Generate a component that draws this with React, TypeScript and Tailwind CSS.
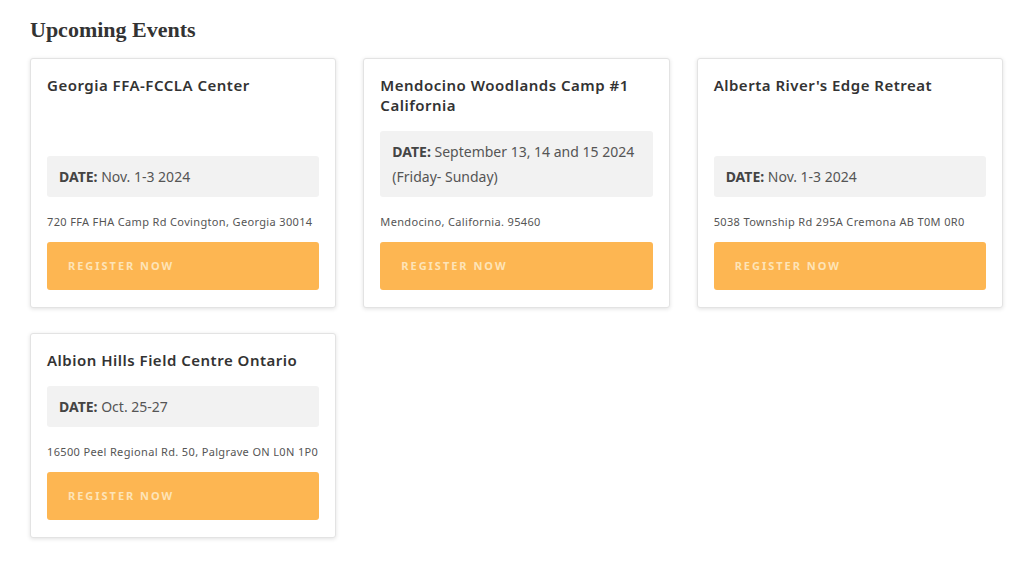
import React from "react";

type Ev = { title: string; date: string; address: string };

const events: Ev[] = [
  { title: "Georgia FFA-FCCLA Center", date: "Nov. 1-3 2024", address: "720 FFA FHA Camp Rd Covington, Georgia 30014" },
  { title: "Mendocino Woodlands Camp #1 California", date: "September 13, 14 and 15 2024 (Friday- Sunday)", address: "Mendocino, California. 95460" },
  { title: "Alberta River's Edge Retreat", date: "Nov. 1-3 2024", address: "5038 Township Rd 295A Cremona AB T0M 0R0" },
  { title: "Albion Hills Field Centre Ontario", date: "Oct. 25-27", address: "16500 Peel Regional Rd. 50, Palgrave ON L0N 1P0" },
];

function Card({ ev }: { ev: Ev }) {
  return (
    <div className="flex flex-col justify-between rounded-[3px] border border-[#e3e3e3] bg-white px-[16px] pt-[16px] pb-[17px] shadow-[0_1px_4px_rgba(0,0,0,0.12)]">
      <h3 className="pr-[10px] text-[15px] font-semibold leading-[20px] tracking-[0.5px] text-[#333]">{ev.title}</h3>
      <div>
        <div className="mt-[16px] rounded-[3px] bg-[#f2f2f2] px-[12px] py-[8px] text-[14px] leading-[25px] text-[#555]">
          <span className="font-bold text-[#444]">DATE:</span> {ev.date}
        </div>
        <p className="mt-[16px] whitespace-nowrap text-[11px] leading-[18px] tracking-[0.35px] text-[#555]">{ev.address}</p>
        <button className="mt-[11px] flex h-[48px] w-full items-center rounded-[3px] bg-[#fdb652] px-[21px] text-[11px] font-bold tracking-[0.18em] text-[#fde4b8]">
          REGISTER NOW
        </button>
      </div>
    </div>
  );
}

export default function App() {
  return (
    <div className="min-h-[583px] bg-white px-[30px] pt-[16px]" style={{ fontFamily: '"Noto Sans", sans-serif' }}>
      <h2 className="text-[22px] font-bold leading-[28px] text-[#333]" style={{ fontFamily: '"Liberation Serif", serif' }}>
        Upcoming Events
      </h2>
      <div className="mt-[14px] grid w-[973px] grid-cols-3 gap-x-[27px] gap-y-[25px]">
        {events.map((ev) => (
          <Card key={ev.title} ev={ev} />
        ))}
      </div>
    </div>
  );
}
